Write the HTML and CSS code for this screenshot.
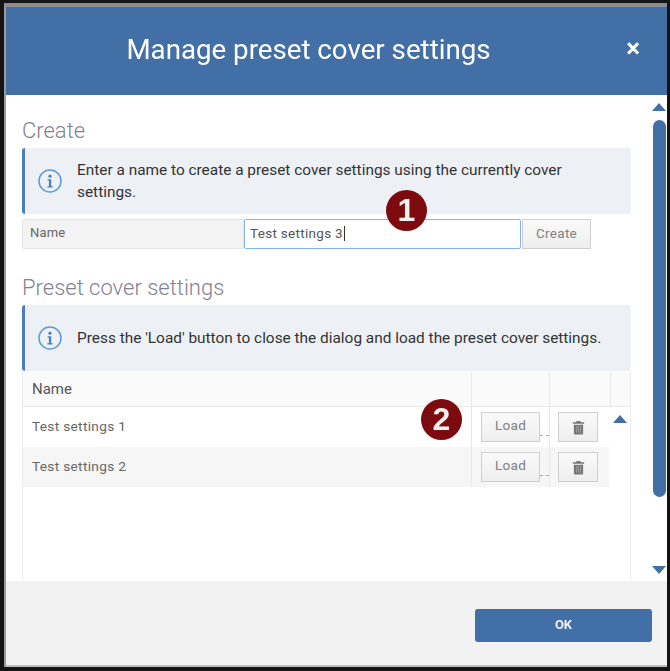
FILE: index.html
```html
<!DOCTYPE html>
<html lang="en">
<head>
  <meta charset="UTF-8">
  <title>Manage preset cover settings</title>
  <link rel="stylesheet" href="styles.css">
</head>
<body>
  <div class="dialog">
    <div class="dialog-header">
      <h1>Manage preset cover settings</h1>
      <span class="close">&times;</span>
    </div>

    <div class="dialog-body">
      <div class="content">
        <h2>Create</h2>
        <div class="info">
          <svg class="info-icon" viewBox="0 0 24 24" width="24" height="24">
            <circle cx="12" cy="12" r="11" fill="none" stroke="#5b9bd5" stroke-width="1.5"/>
            <circle cx="12" cy="7.2" r="1.6" fill="#4a7fb5"/>
            <path d="M9.6 10.2h3.6v7h1.5v1.4H9.4v-1.4h1.5v-5.6H9.6z" fill="#4a7fb5"/>
          </svg>
          <p>Enter a name to create a preset cover settings using the currently cover settings.</p>
        </div>
        <div class="form-row">
          <div class="form-label">Name</div>
          <div class="form-input">Test settings 3<span class="caret"></span></div>
          <div class="btn btn-create">Create</div>
        </div>

        <h2 class="second">Preset cover settings</h2>
        <div class="info">
          <svg class="info-icon" viewBox="0 0 24 24" width="24" height="24">
            <circle cx="12" cy="12" r="11" fill="none" stroke="#5b9bd5" stroke-width="1.5"/>
            <circle cx="12" cy="7.2" r="1.6" fill="#4a7fb5"/>
            <path d="M9.6 10.2h3.6v7h1.5v1.4H9.4v-1.4h1.5v-5.6H9.6z" fill="#4a7fb5"/>
          </svg>
          <p>Press the 'Load' button to close the dialog and load the preset cover settings.</p>
        </div>

        <div class="grid">
          <div class="grid-head">
            <div class="cell cell-name">Name</div>
            <div class="cell cell-load"></div>
            <div class="cell cell-del"></div>
            <div class="cell cell-end"></div>
          </div>
          <div class="grid-rows">
            <div class="rows">
              <div class="row">
                <div class="cell cell-name">Test settings 1</div>
                <div class="cell cell-load"><div class="btn btn-load">Load</div><span class="dots"></span></div>
                <div class="cell cell-del">
                  <div class="btn btn-del">
                    <svg viewBox="0 0 14 16" width="13" height="15">
                      <path d="M5 1h4l.6 1.4H13v1.5H1V2.400h3.400z" fill="#777"/>
                      <path d="M2 5h10v9.500a1 1 0 0 1-1 1H3a1 1 0 0 1-1-1z" fill="#777"/>
                      <path d="M4.800 6.500v7M7 6.500v7M9.200 6.500v7" stroke="#aaa" stroke-width=".8"/>
                    </svg>
                  </div>
                </div>
              </div>
              <div class="row row-alt">
                <div class="cell cell-name">Test settings 2</div>
                <div class="cell cell-load"><div class="btn btn-load">Load</div><span class="dots"></span></div>
                <div class="cell cell-del">
                  <div class="btn btn-del">
                    <svg viewBox="0 0 14 16" width="13" height="15">
                      <path d="M5 1h4l.6 1.4H13v1.5H1V2.400h3.400z" fill="#777"/>
                      <path d="M2 5h10v9.500a1 1 0 0 1-1 1H3a1 1 0 0 1-1-1z" fill="#777"/>
                      <path d="M4.800 6.500v7M7 6.500v7M9.200 6.500v7" stroke="#aaa" stroke-width=".8"/>
                    </svg>
                  </div>
                </div>
              </div>
            </div>
            <div class="rows-scroll"><span class="tri tri-up"></span></div>
          </div>
        </div>
      </div>

      <div class="scrollbar">
        <span class="tri tri-up"></span>
        <div class="thumb"></div>
        <span class="tri tri-down"></span>
      </div>
    </div>

    <div class="dialog-footer">
      <div class="btn-ok">OK</div>
    </div>

    <span class="badge badge-1">1</span>
    <span class="badge badge-2">2</span>
  </div>
</body>
</html>
```

FILE: styles.css
```css
body {
  margin: 0;
  padding: 3px 3px 0 4px;
  box-sizing: border-box;
  height: 671px;
  overflow: hidden;
  background: #141414;
  font-family: Roboto, sans-serif;
}

.dialog {
  position: relative;
  display: flex;
  flex-direction: column;
  box-sizing: border-box;
  height: 664px;
  background: #fff;
  border-top: 4px solid #8d8d8d;
  border-left: 2px solid #9a9a9a;
  filter: blur(0.4px);
}

.dialog-header {
  position: relative;
  flex: 0 0 88px;
  display: flex;
  align-items: center;
  justify-content: center;
  padding-right: 56px;
  background: #426fa6;
  color: #fff;
}

.dialog-header h1 {
  margin: 0 0 3px;
  font-size: 27.700px;
  font-weight: 400;
}

.close {
  position: absolute;
  right: 27px;
  top: 26px;
  font-size: 26px;
  font-weight: 700;
  line-height: 30px;
}

.dialog-body {
  flex: 1;
  display: flex;
  min-height: 0;
}

.content {
  flex: 0 0 609px;
  margin-left: 16px;
  overflow: hidden;
}

h2 {
  margin: 24px 0 5px;
  height: 24px;
  font-size: 22px;
  line-height: 24px;
  font-weight: 300;
  color: #82828f;
}

h2.second {
  margin-top: 27px;
}

.info {
  display: flex;
  align-items: center;
  box-sizing: border-box;
  height: 66px;
  padding-left: 13px;
  background: #edf1f6;
  border-left: 3px solid #4a7fbe;
  border-radius: 3px;
}

.info-icon {
  flex: none;
}

.info p {
  margin: 0 0 0 15px;
  padding-right: 24px;
  font-size: 15.400px;
  line-height: 22px;
  color: #333;
}

.form-row {
  display: flex;
  height: 30px;
  margin-top: 5px;
}

.form-label {
  width: 222px;
  box-sizing: border-box;
  padding-left: 7px;
  background: #f3f3f3;
  border: 1px solid #e4e4e4;
  border-radius: 2px 0 0 2px;
  font-size: 13px;
  line-height: 26px;
  letter-spacing: 0.2px;
  color: #666;
}

.form-input {
  width: 277px;
  box-sizing: border-box;
  padding-left: 5px;
  border: 1.500px solid #82b4e8;
  border-radius: 2px;
  font-size: 13.500px;
  line-height: 27px;
  letter-spacing: 0.3px;
  color: #555;
}

.caret {
  display: inline-block;
  width: 1px;
  height: 15px;
  margin-left: 1px;
  vertical-align: -3px;
  background: #333;
}

.btn {
  display: flex;
  align-items: center;
  justify-content: center;
  box-sizing: border-box;
  background: linear-gradient(#fafafa, #eeeeee);
  border: 1.500px solid #cfcfcf;
  font-size: 13.500px;
  letter-spacing: 0.3px;
  color: #808080;
}

.btn-create {
  width: 69px;
  margin-left: 1px;
  padding-bottom: 3px;
}

.grid {
  display: flex;
  flex-direction: column;
  height: 210px;
  margin-top: 1px;
  box-sizing: border-box;
  border-left: 1.500px solid #ececec;
  border-right: 1px solid #ececec;
}

.grid-head {
  display: flex;
  height: 35px;
  flex: none;
  box-sizing: border-box;
  background: #fafafa;
  border-bottom: 1.500px solid #e8e8e8;
  font-size: 15px;
  color: #555;
}

.grid-rows {
  display: flex;
  flex: 1;
}

.rows {
  width: 586px;
}

.rows-scroll {
  flex: 1;
  padding-top: 1px;
  text-align: center;
}

.row {
  display: flex;
  height: 40px;
  font-size: 13.700px;
  letter-spacing: 0.3px;
  color: #666;
}

.row-alt {
  background: #f6f6f6;
}

.cell {
  display: flex;
  align-items: center;
  box-sizing: border-box;
}

.cell-name {
  width: 448px;
  padding-left: 9px;
}

.row .cell-name {
  padding-bottom: 3px;
}

.cell-load {
  width: 78px;
  padding-left: 9px;
  border-left: 1px solid #e8e8e8;
}

.cell-del {
  width: 60px;
  padding-left: 8px;
  border-left: 1px solid #e8e8e8;
}

.cell-end {
  flex: 1;
  border-left: 1px solid #e8e8e8;
  margin-left: 1px;
}

.btn-load {
  width: 59px;
  height: 30px;
  padding-bottom: 4px;
}

.dots {
  width: 9px;
  height: 0;
  margin-top: 16px;
  border-top: 1px dashed #aaa;
}

.btn-del {
  width: 40px;
  height: 30px;
}

.tri {
  display: inline-block;
  width: 0;
  height: 0;
  border-left: 7px solid transparent;
  border-right: 7px solid transparent;
}

.tri-up {
  border-bottom: 8px solid #426fa6;
}

.tri-down {
  border-top: 8px solid #426fa6;
}

.scrollbar {
  flex: 1;
  display: flex;
  flex-direction: column;
  align-items: center;
  padding: 8px 6px 7px 21px;
  box-sizing: border-box;
}

.scrollbar .tri {
  flex: none;
}

.thumb {
  width: 13px;
  height: 377px;
  margin: 9px 0 69px;
  background: #426fa6;
  border-radius: 7px;
}

.dialog-footer {
  flex: 0 0 86px;
  display: flex;
  justify-content: flex-end;
  align-items: flex-start;
  box-sizing: border-box;
  padding: 28px 15px 0 0;
  background: #f2f2f2;
  border-bottom: 2px solid #bdbdbd;
}

.btn-ok {
  width: 177px;
  height: 33px;
  background: #426fa6;
  border-radius: 3px;
  color: #eef2f7;
  font-size: 13px;
  font-weight: 700;
  line-height: 32px;
  text-align: center;
}

.badge {
  position: absolute;
  width: 41px;
  height: 41px;
  border-radius: 50%;
  background: #7d0a0f;
  color: #f4f0f0;
  font-family: "Liberation Sans", sans-serif;
  font-size: 32px;
  font-weight: 700;
  line-height: 41px;
  text-align: center;
}

.badge-1 {
  left: 380px;
  top: 183px;
}

.badge-2 {
  left: 415px;
  top: 392px;
}
```
